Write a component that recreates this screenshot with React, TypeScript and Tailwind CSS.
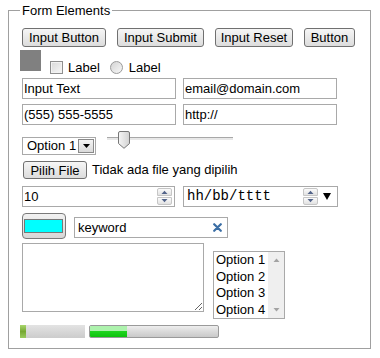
import React from 'react'

const sans = "[font-family:'Liberation_Sans',Arial,sans-serif]"
const mono = "[font-family:'Liberation_Mono','Courier_New',monospace]"

function PushButton({ className, children }: { className: string; children: React.ReactNode }) {
  return (
    <button
      type="button"
      className={`${className} h-[19px] rounded-[3px] border border-[#707070] bg-linear-to-b from-[#f6f6f6] to-[#dcdcdc] text-[13px] leading-[15px] text-black`}
    >
      {children}
    </button>
  )
}

function TextBox({ value }: { value: string }) {
  return (
    <input
      readOnly
      value={value}
      className="w-[154px] h-[21px] border border-[#a9a9a9] px-[1px] text-[13px] text-black outline-none bg-white"
    />
  )
}

function SpinArrows() {
  return (
    <div className="flex flex-col w-[15px] h-[17px]">
      <div className="h-[8px] mb-[1px] rounded-t-[2px] border border-[#c6c6c6] bg-linear-to-b from-[#fbfbfb] to-[#e2e2e2] flex items-center justify-center">
        <svg width="7" height="4" viewBox="0 0 7 4">
          <path d="M0.5 4L3.5 0.8L6.5 4Z" fill="#53648a" />
        </svg>
      </div>
      <div className="h-[8px] rounded-b-[2px] border border-[#c6c6c6] bg-linear-to-b from-[#fbfbfb] to-[#e2e2e2] flex items-center justify-center">
        <svg width="7" height="4" viewBox="0 0 7 4">
          <path d="M0.5 0L3.5 3.2L6.5 0Z" fill="#53648a" />
        </svg>
      </div>
    </div>
  )
}

export default function App() {
  return (
    <div className={`w-[380px] h-[358px] bg-white pt-[3px] pl-[8px] text-black ${sans}`}>
      <fieldset className="w-[363px] h-[346px] border border-[#a0a0a0] pl-[11px] pt-[10px]">
        <legend className="px-[2px] text-[13px] leading-[15px]">Form Elements</legend>

        {/* buttons */}
        <div className="flex gap-[11px] pl-[2px]">
          <PushButton className="w-[84px]">Input Button</PushButton>
          <PushButton className="w-[87px]">Input Submit</PushButton>
          <PushButton className="w-[78px]">Input Reset</PushButton>
          <PushButton className="w-[51px]">Button</PushButton>
        </div>

        {/* image, checkbox, radio */}
        <div className="flex h-[25px] mt-[3px] text-[13px] leading-[15px]">
          <div className="w-[21px] h-[21px] bg-[#808080]" />
          <div className="ml-[9px] mt-[11px] w-[13px] h-[13px] border border-[#8f8f8f] bg-linear-to-br from-[#d9d9d9] to-[#f7f7f7] shadow-[inset_0_0_0_1px_#f2f2f2]" />
          <span className="ml-[5px] mt-[10px]">Label</span>
          <div className="ml-[10px] mt-[11px] w-[13px] h-[13px] rounded-full border border-[#9a9a9a] bg-linear-to-br from-[#d4d4d4] to-[#f7f7f7]" />
          <span className="ml-[6px] mt-[10px]">Label</span>
        </div>

        {/* text inputs */}
        <div className="flex gap-[7px] mt-[3px] pl-[2px]">
          <TextBox value="Input Text" />
          <TextBox value="email@domain.com" />
        </div>
        <div className="flex gap-[7px] mt-[5px] pl-[2px]">
          <TextBox value="(555) 555-5555" />
          <TextBox value="http://" />
        </div>

        {/* select + range */}
        <div className="flex h-[24px] mt-[6px]">
          <div className="ml-[2px] mt-[6px] w-[74px] h-[18px] border border-[#a9a9a9] flex">
            <span className="flex-1 pl-[4px] text-[13px] leading-[16px]">Option 1</span>
            <div className="w-[16px] my-[1px] mr-[1px] border border-[#8a8a8a] bg-linear-to-b from-[#f4f4f4] to-[#dadada] flex items-center justify-center">
              <svg width="7" height="4" viewBox="0 0 7 4">
                <path d="M0 0H7L3.5 4Z" fill="#000" />
              </svg>
            </div>
          </div>
          <div className="relative ml-[11px] w-[126px] h-[18px]">
            <div className="mt-[6px] h-[3px] border-t border-[#a8a8a8] bg-[#e8e8e8]" />
            <svg className="absolute left-[11px] top-0" width="12" height="18" viewBox="0 0 12 18">
              <defs>
                <linearGradient id="thumb" x1="0" x2="1" y1="0" y2="0">
                  <stop offset="0" stopColor="#f6f6f6" />
                  <stop offset="1" stopColor="#d2d2d2" />
                </linearGradient>
              </defs>
              <path
                d="M2 0.5H10Q11.5 0.5 11.5 2V12.5L6 17.3L0.5 12.5V2Q0.5 0.5 2 0.5Z"
                fill="url(#thumb)"
                stroke="#777"
              />
            </svg>
          </div>
        </div>

        {/* file */}
        <div className="flex items-center h-[18px] mt-[6px] text-[13px]">
          <PushButton className="ml-[3px] w-[64px] !h-[18px]">Pilih File</PushButton>
          <span className="ml-[5px]">Tidak ada file yang dipilih</span>
        </div>

        {/* number + date */}
        <div className="flex gap-[8px] mt-[7px] pl-[2px]">
          <div className="w-[153px] h-[21px] border border-[#a9a9a9] flex items-center pl-[1px] pr-[2px]">
            <span className="flex-1 text-[13px]">10</span>
            <SpinArrows />
          </div>
          <div className="w-[155px] h-[21px] border border-[#a9a9a9] flex items-center pl-[3px] pr-[6px]">
            <span className={`flex-1 text-[14px] ${mono}`}>hh/bb/tttt</span>
            <SpinArrows />
            <svg className="ml-[5px]" width="8" height="7" viewBox="0 0 8 7">
              <path d="M0 0H8L4 7Z" fill="#000" />
            </svg>
          </div>
        </div>

        {/* color + search */}
        <div className="flex h-[26px] mt-[6px]">
          <div className="ml-[2px] w-[44px] h-[26px] rounded-[4px] border border-[#7a7a7a] bg-linear-to-b from-[#f2f2f2] to-[#d6d6d6] pt-[5px] pl-[1px]">
            <div className="w-[39px] h-[14px] border border-[#777] bg-[#00ffff]" />
          </div>
          <div className="ml-[8px] mt-[4px] w-[154px] h-[21px] border border-[#a9a9a9] flex items-center pl-[3px] pr-[5px]">
            <span className="flex-1 text-[13px]">keyword</span>
            <svg width="9" height="9" viewBox="0 0 9 9">
              <path d="M1.2 1.2L7.8 7.8M7.8 1.2L1.2 7.8" stroke="#3b6ea5" strokeWidth="2.2" strokeLinecap="round" />
            </svg>
          </div>
        </div>

        {/* textarea + listbox */}
        <div className="flex mt-[4px]">
          <textarea readOnly className="ml-[2px] w-[182px] h-[69px] border border-[#a9a9a9] resize outline-none" />
          <div className="ml-[9px] mt-[8px] w-[72px] h-[68px] border border-[#a9a9a9] flex">
            <div className="flex-1 pl-[2px] text-[13px] leading-[16.5px]">
              <div>Option 1</div>
              <div>Option 2</div>
              <div>Option 3</div>
              <div>Option 4</div>
            </div>
            <div className="w-[16px] bg-[#efefef] flex flex-col justify-between items-center py-[6px]">
              <svg width="7" height="4" viewBox="0 0 7 4">
                <path d="M0.5 4L3.5 0.5L6.5 4Z" fill="#a3a3a3" />
              </svg>
              <svg width="7" height="4" viewBox="0 0 7 4">
                <path d="M0.5 0L3.5 3.5L6.5 0Z" fill="#a3a3a3" />
              </svg>
            </div>
          </div>
        </div>

        {/* progress */}
        <div className="flex mt-[6px]">
          <div className="w-[65px] h-[13px] bg-linear-to-b from-[#e3e3e3] to-[#cccccc] flex">
            <div className="w-[6px] h-full bg-linear-to-b from-[#a9d66c] via-[#76a832] to-[#9acb5e]" />
          </div>
          <div className="ml-[4px] w-[130px] h-[13px] rounded-[2px] border border-[#9a9a9a] bg-linear-to-b from-[#eeeeee] via-[#dadada] to-[#c9c9c9] flex overflow-hidden">
            <div className="w-[37px] h-full flex flex-col">
              <div className="h-[5px] bg-[#adf2ad]" />
              <div className="flex-1 bg-linear-to-b from-[#1fd61f] to-[#0cc20c]" />
            </div>
          </div>
        </div>
      </fieldset>
    </div>
  )
}
